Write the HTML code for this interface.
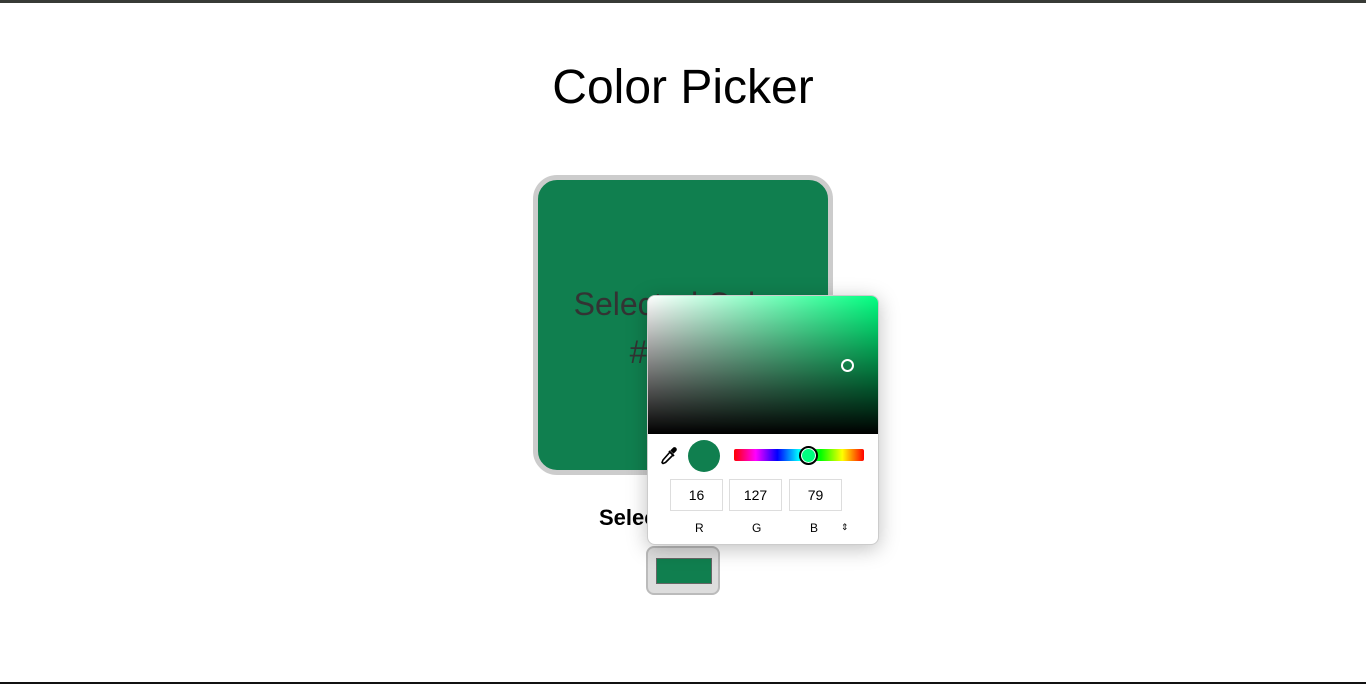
<!DOCTYPE html>
<html><head><style>
html,body{margin:0;padding:0;width:1366px;height:684px;overflow:hidden;background:#fff;font-family:"Liberation Sans",Arial,sans-serif;position:relative}
.topb{position:absolute;left:0;top:0;width:1366px;height:3px;background:#383b36}
.botb{position:absolute;left:0;top:682px;width:1366px;height:2px;background:#111}
h1{position:absolute;left:0;width:1366px;top:61px;margin:0;text-align:center;font-weight:normal;font-size:48px;line-height:54px;color:#000}
.box{position:absolute;left:533px;top:175px;width:290px;height:290px;border:5px solid #ccc;border-radius:24px;background:#107f4f;color:#333;font-size:32px;text-align:center}
.box .t{position:absolute;left:0;width:100%;top:100px;line-height:48px}
.lbl{position:absolute;left:599px;top:505px;font-weight:bold;font-size:22px;color:#000}
.sw{position:absolute;left:646px;top:546px;width:70px;height:45px;border:2px solid #bbb;border-radius:8px;background:#ddd}
.sw div{position:absolute;left:8px;top:10px;width:54px;height:24px;background:#107f4f;border:1px solid #666}
.pk{position:absolute;left:647px;top:295px;width:232px;height:250px;background:#fff;border-radius:8px;box-shadow:0 4px 20px rgba(0,0,0,.25);overflow:hidden;border:1px solid #ccc;box-sizing:border-box}
.sat{position:absolute;left:0;top:0;width:232px;height:138px;background:linear-gradient(to top,#000,rgba(0,0,0,0)),linear-gradient(to right,#fff,#00ff80)}
.cur{position:absolute;left:193px;top:63px;width:9px;height:9px;border:2px solid #fff;border-radius:50%}
.dot{position:absolute;left:40px;top:144px;width:32px;height:32px;border-radius:50%;background:#107f4f}
.hue{position:absolute;left:86px;top:153px;width:130px;height:12px;border-radius:2px;background:linear-gradient(to right,#f00,#f0f,#00f,#0ff,#0f0,#ff0,#f00)}
.hk{position:absolute;left:151px;top:150px;width:15px;height:15px;border-radius:50%;border:2px solid #000;background:#00ff80;box-shadow:0 0 0 1px #fff inset}
.in{position:absolute;top:183px;width:53px;height:32px;border:1px solid #ddd;box-sizing:border-box;font-size:14px;text-align:center;line-height:30px;color:#000}
.l{position:absolute;top:225px;font-size:12px;color:#000}
</style></head><body>
<div class="topb"></div><div class="botb"></div>
<h1>Color Picker</h1>
<div class="box"><div class="t">Selected Color:<br>#107f4f</div></div>
<div class="lbl">Selected Color:</div>
<div class="sw"><div></div></div>
<div class="pk">
<div class="sat"></div><div class="cur"></div>
<svg style="position:absolute;left:12px;top:151px" width="18" height="18" viewBox="0 0 18 18"><path d="M10 5l3 3-7.5 7.5-2.5 1-1-1 1-2.5z" fill="#fff" stroke="#000" stroke-width="1.6" stroke-linejoin="round"/><path d="M9 4l5 5M11.5 3.5l2-2a1.4 1.4 0 0 1 2 2l-2 2z" fill="#000" stroke="#000" stroke-width="1.8"/></svg>
<div class="dot"></div>
<div class="hue"></div><div class="hk"></div>
<div class="in" style="left:22px">16</div>
<div class="in" style="left:81px">127</div>
<div class="in" style="left:141px">79</div>
<div class="l" style="left:47px">R</div>
<div class="l" style="left:104px">G</div>
<div class="l" style="left:162px">B</div>
<div class="l" style="left:193px;font-size:9px;top:226px">&#8661;</div>
</div>
</body></html>
